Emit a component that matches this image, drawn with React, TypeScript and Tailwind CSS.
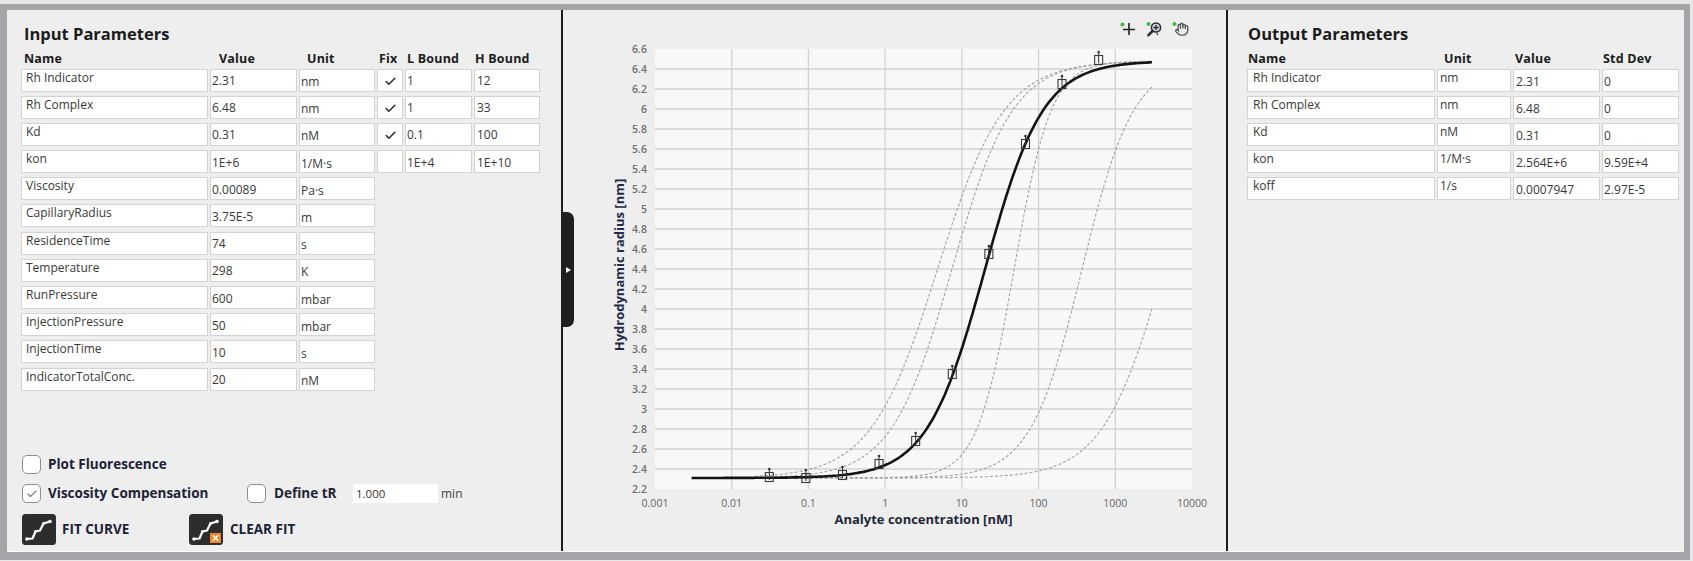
import { Check } from "lucide-react";
import clsx from "clsx";

type InputRow = {
  name: string;
  value: string;
  unit: string;
  fit?: { fix: boolean; lo: string; hi: string };
};

const inputRows: InputRow[] = [
  { name: "Rh Indicator", value: "2.31", unit: "nm", fit: { fix: true, lo: "1", hi: "12" } },
  { name: "Rh Complex", value: "6.48", unit: "nm", fit: { fix: true, lo: "1", hi: "33" } },
  { name: "Kd", value: "0.31", unit: "nM", fit: { fix: true, lo: "0.1", hi: "100" } },
  { name: "kon", value: "1E+6", unit: "1/M·s", fit: { fix: false, lo: "1E+4", hi: "1E+10" } },
  { name: "Viscosity", value: "0.00089", unit: "Pa·s" },
  { name: "CapillaryRadius", value: "3.75E-5", unit: "m" },
  { name: "ResidenceTime", value: "74", unit: "s" },
  { name: "Temperature", value: "298", unit: "K" },
  { name: "RunPressure", value: "600", unit: "mbar" },
  { name: "InjectionPressure", value: "50", unit: "mbar" },
  { name: "InjectionTime", value: "10", unit: "s" },
  { name: "IndicatorTotalConc.", value: "20", unit: "nM" },
];

const outputRows = [
  ["Rh Indicator", "nm", "2.31", "0"],
  ["Rh Complex", "nm", "6.48", "0"],
  ["Kd", "nM", "0.31", "0"],
  ["kon", "1/M·s", "2.564E+6", "9.59E+4"],
  ["koff", "1/s", "0.0007947", "2.97E-5"],
];

function Cell({ className, children }: { className: string; children?: React.ReactNode }) {
  return (
    <div
      className={clsx(
        "h-[23px] shrink-0 overflow-hidden whitespace-nowrap border border-[#d3d3d3] bg-white text-[12px] leading-[16px] text-[#383838]",
        className
      )}
    >
      {children}
    </div>
  );
}

function Box({ checked }: { checked?: boolean }) {
  return (
    <span className="flex h-[19px] w-[19px] shrink-0 items-center justify-center rounded-[5px] border-[1.5px] border-[#8e8e8e] bg-white">
      {checked && <Check size={12} strokeWidth={2.2} className="text-[#7c7c7c]" />}
    </span>
  );
}

function FitIcon({ clear }: { clear?: boolean }) {
  return (
    <svg width="34" height="31" viewBox="0 0 34 31" className="shrink-0">
      <rect x="0" y="0" width="34" height="31" rx="3.5" fill="#2d2d2d" />
      <path
        d="M5 25 L10.5 24.5 L13.5 17.5 L18 16.5 L21.5 9.5 L28 7.5"
        stroke="#fff"
        strokeWidth="2.2"
        fill="none"
        strokeLinecap="round"
        strokeLinejoin="round"
      />
      <circle cx="5" cy="25" r="1.8" fill="#fff" />
      <circle cx="13.5" cy="17.5" r="1.5" fill="#fff" />
      <circle cx="21.5" cy="9.5" r="1.5" fill="#fff" />
      <circle cx="28" cy="7.5" r="1.8" fill="#fff" />
      {clear && (
        <g>
          <rect x="21" y="19" width="11" height="10" fill="#f0862b" />
          <path d="M23.8 21.3 L29.2 26.7 M29.2 21.3 L23.8 26.7" stroke="#fff" strokeWidth="1.5" />
        </g>
      )}
    </svg>
  );
}

// ---- chart ----
const PX0 = 92;
const PX1 = 629;
const PY0 = 11;
const PY1 = 451;
const xOf = (c: number) => PX0 + ((Math.log10(c) + 3) * (PX1 - PX0)) / 7;
const yOf = (v: number) => PY1 - ((v - 2.2) / 4.4) * (PY1 - PY0);
const hill = (c: number, K: number, n: number) => {
  const r = Math.pow(c / K, n);
  return 2.31 + (4.17 * r) / (1 + r);
};

function curve(K: number, n: number, from: number, to: number) {
  const steps = 180;
  const a = Math.log10(from);
  const b = Math.log10(to);
  let d = "";
  for (let i = 0; i <= steps; i++) {
    const c = Math.pow(10, a + ((b - a) * i) / steps);
    d += `${i === 0 ? "M" : "L"}${xOf(c).toFixed(1)} ${yOf(hill(c, K, n)).toFixed(1)} `;
  }
  return d;
}

const dashed = [
  { K: 4.8, n: 1.0 },
  { K: 7.4, n: 1.1 },
  { K: 48, n: 1.8 },
  { K: 368, n: 1.29 },
  { K: 4280, n: 1.08 },
];

const points: [number, number][] = [
  [0.0309, 2.32],
  [0.0926, 2.31],
  [0.278, 2.34],
  [0.833, 2.45],
  [2.5, 2.68],
  [7.5, 3.35],
  [22.5, 4.55],
  [67.5, 5.65],
  [202, 6.25],
  [607, 6.49],
];

const yTicks = Array.from({ length: 23 }, (_, i) => 2.2 + i * 0.2);
const xTicks = ["0.001", "0.01", "0.1", "1", "10", "100", "1000", "10000"];

function Chart() {
  return (
    <svg width="663" height="513" viewBox="0 0 663 513" className="overflow-visible">
      <rect x={PX0} y={PY0} width={PX1 - PX0} height={PY1 - PY0} fill="#f8f8f8" />
      {yTicks.slice(1, -1).map((v) => (
        <line key={v} x1={PX0} x2={PX1} y1={yOf(v)} y2={yOf(v)} stroke="#d3d3d3" strokeWidth="1.3" />
      ))}
      {xTicks.slice(1, -1).map((_, i) => {
        const x = PX0 + ((i + 1) * (PX1 - PX0)) / 7;
        return <line key={i} x1={x} x2={x} y1={PY0} y2={PY1} stroke="#d3d3d3" strokeWidth="1.3" />;
      })}
      {yTicks.map((v) => (
        <text
          key={v}
          x={84}
          y={yOf(v)}
          textAnchor="end"
          dominantBaseline="central"
          fontSize="10.5"
          fontWeight="600"
          fill="#6e6e6e"
        >
          {Number(v.toFixed(1)).toString()}
        </text>
      ))}
      {xTicks.map((t, i) => (
        <text
          key={t}
          x={PX0 + (i * (PX1 - PX0)) / 7}
          y={465}
          textAnchor="middle"
          dominantBaseline="central"
          fontSize="10.5"
          fill="#666"
        >
          {t}
        </text>
      ))}
      <text x={(PX0 + PX1) / 2} y={481} textAnchor="middle" dominantBaseline="central" fontSize="13" fontWeight="700" fill="#23293a">
        Analyte concentration [nM]
      </text>
      <text
        transform={`translate(56 ${(PY0 + PY1) / 2 - 4}) rotate(-90)`}
        textAnchor="middle"
        dominantBaseline="central"
        fontSize="13"
        fontWeight="700"
        fill="#222c48"
      >
        Hydrodynamic radius [nm]
      </text>
      {dashed.map((c, i) => (
        <path key={i} d={curve(c.K, c.n, 0.02, 3000)} fill="none" stroke="#a0a0a0" strokeWidth="1.1" strokeDasharray="3 2" />
      ))}
      <path d={curve(20, 1.15, 0.003, 3000)} fill="none" stroke="#141414" strokeWidth="2.6" strokeLinejoin="round" />
      {points.map(([c, v]) => {
        const x = xOf(c);
        const y = yOf(v);
        return (
          <g key={c}>
            <line x1={x} x2={x} y1={y - 8} y2={y + 3} stroke="#333" strokeWidth="1" />
            <circle cx={x} cy={y - 8} r="1.3" fill="#333" />
            <rect x={x - 4} y={y - 4.5} width="8" height="9" fill="none" stroke="#3a3a3a" strokeWidth="1.1" />
          </g>
        );
      })}
    </svg>
  );
}

function CrossIcon() {
  return (
    <svg width="17" height="16" viewBox="0 0 17 16">
      <circle cx="2.5" cy="3.5" r="2" fill="#3dbb3d" />
      <path d="M9 2 V14 M3 8.5 H15" stroke="#222" strokeWidth="1.6" />
    </svg>
  );
}

function ZoomIcon() {
  return (
    <svg width="17" height="16" viewBox="0 0 17 16">
      <circle cx="2.5" cy="3" r="2" fill="#3dbb3d" />
      <circle cx="10" cy="6.5" r="4.6" fill="#c9d2e6" stroke="#2b2b2b" strokeWidth="1.5" />
      <path d="M10 4 V9 M7.5 6.5 H12.5" stroke="#2b2b2b" strokeWidth="1.3" />
      <path d="M6.6 10 L2.5 14.2" stroke="#2b2b2b" strokeWidth="2.6" strokeLinecap="round" />
      <path d="M10 12.5 L12.5 12.5 L11.25 14.5 Z" fill="#2b2b2b" />
    </svg>
  );
}

function HandIcon() {
  return (
    <svg width="17" height="16" viewBox="0 0 17 16">
      <circle cx="2.5" cy="3" r="2" fill="#3dbb3d" />
      <g transform="translate(2.5 1) scale(0.6)" fill="none" stroke="#555" strokeWidth="2.2" strokeLinecap="round" strokeLinejoin="round">
        <path d="M18 11V6a2 2 0 0 0-2-2a2 2 0 0 0-2 2" />
        <path d="M14 10V4a2 2 0 0 0-2-2a2 2 0 0 0-2 2v2" />
        <path d="M10 10.5V6a2 2 0 0 0-2-2a2 2 0 0 0-2 2v8" />
        <path d="M18 8a2 2 0 1 1 4 0v6a8 8 0 0 1-8 8h-2c-2.8 0-4.5-.86-5.990-2.34l-3.6-3.6a2 2 0 0 1 2.83-2.82L7 15" />
      </g>
    </svg>
  );
}

function InputPanel() {
  return (
    <div className="flex h-full w-[554px] shrink-0 flex-col pb-[6px] pl-[14px] pt-[12.5px]">
      <h2 className="pl-[3px] text-[16.5px] font-bold leading-[22px] text-[#1b1b1b]">Input Parameters</h2>
      <div className="mt-[7px] flex h-[14px] gap-[2px] text-[12.5px] font-bold leading-[14px] tracking-[0.2px] text-[#1c1c1c]">
        <div className="w-[187px] pl-[3px]">Name</div>
        <div className="w-[87px] pl-[9px]">Value</div>
        <div className="w-[76px] pl-[8px]">Unit</div>
        <div className="w-[26px] pl-[2px]">Fix</div>
        <div className="w-[67px] pl-[2px]">L Bound</div>
        <div className="w-[66px] pl-[1px]">H Bound</div>
      </div>
      <div className="mt-[3px] flex flex-col gap-[4.2px]">
        {inputRows.map((r) => (
          <div key={r.name} className="flex gap-[2px]">
            <Cell className="w-[187px] pl-[4px]">{r.name}</Cell>
            <Cell className="w-[87px] pl-[1px] pt-[3.5px]">{r.value}</Cell>
            <Cell className="w-[76px] pl-[1px] pt-[4.5px]">{r.unit}</Cell>
            {r.fit && (
              <>
                <Cell className="w-[26px] pl-[6px] pt-[5.5px]">
                  {r.fit.fix && <Check size={13} strokeWidth={3} className="text-[#2f2f2f]" />}
                </Cell>
                <Cell className="w-[67px] pl-[1px] pt-[3.5px]">{r.fit.lo}</Cell>
                <Cell className="w-[66px] pl-[2px] pt-[3.5px]">{r.fit.hi}</Cell>
              </>
            )}
          </div>
        ))}
      </div>
      <div className="mt-auto flex flex-col pl-[1px] text-[13.5px] font-bold leading-[19px] text-[#1d2236]">
        <label className="flex h-[19px] items-center gap-[7px]">
          <Box />
          <span>Plot Fluorescence</span>
        </label>
        <div className="mt-[10px] flex h-[19px] items-center">
          <label className="flex w-[225px] items-center gap-[7px]">
            <Box checked />
            <span>Viscosity Compensation</span>
          </label>
          <label className="flex items-center gap-[8px]">
            <Box />
            <span className="w-[79px]">Define tR</span>
          </label>
          <div className="h-[19px] w-[85px] bg-white pl-[3px] text-[11.5px] font-normal leading-[19px] text-[#333]">1.000</div>
          <span className="ml-[3px] text-[12px] font-normal text-[#444]">min</span>
        </div>
        <div className="mt-[11px] flex h-[31px] items-center">
          <div className="flex w-[167px] items-center gap-[6px]">
            <FitIcon />
            <span>FIT CURVE</span>
          </div>
          <div className="flex items-center gap-[7px]">
            <FitIcon clear />
            <span>CLEAR FIT</span>
          </div>
        </div>
      </div>
    </div>
  );
}

function ChartPanel() {
  return (
    <div className="relative flex h-full w-[663px] shrink-0 flex-col">
      <div className="flex h-[28px] justify-end gap-[9px] pr-[37px] pt-[11px]">
        <CrossIcon />
        <ZoomIcon />
        <HandIcon />
      </div>
      <Chart />
      <div className="absolute left-[-1px] top-[202px] flex h-[115px] w-[12px] items-center rounded-r-[7px] bg-[#1f1f1f] pl-[4px]">
        <span className="h-0 w-0 border-y-[3.5px] border-l-[5px] border-y-transparent border-l-white" />
      </div>
    </div>
  );
}

function OutputPanel() {
  return (
    <div className="flex h-full flex-1 flex-col pl-[19px] pt-[12.5px]">
      <h2 className="pl-[1px] text-[16.5px] font-bold leading-[22px] text-[#1b1b1b]">Output Parameters</h2>
      <div className="mt-[7px] flex h-[14px] gap-[2px] text-[12.5px] font-bold leading-[14px] tracking-[0.2px] text-[#1c1c1c]">
        <div className="w-[188px] pl-[1px]">Name</div>
        <div className="w-[74px] pl-[7px]">Unit</div>
        <div className="w-[87px] pl-[2px]">Value</div>
        <div className="w-[77px] pl-[1px]">Std Dev</div>
      </div>
      <div className="mt-[3px] flex flex-col gap-[4px]">
        {outputRows.map(([name, unit, value, sd]) => (
          <div key={name} className="flex gap-[2px]">
            <Cell className="w-[188px] pl-[5px]">{name}</Cell>
            <Cell className="w-[74px] pl-[2px] pt-[0.5px]">{unit}</Cell>
            <Cell className="w-[87px] pl-[2px] pt-[4px]">{value}</Cell>
            <Cell className="w-[77px] pl-[1px] pt-[4px]">{sd}</Cell>
          </div>
        ))}
      </div>
    </div>
  );
}

export default function App() {
  return (
    <div className="h-[561px] w-full bg-[#e7e7e7] pb-[1px] pr-[3px] pt-[4px] font-['Open_Sans',sans-serif]">
      <div className="h-full border-solid border-[#a4a4a9] border-b-[8px] border-l-[7px] border-r-[6px] border-t-[6px]">
        <div className="flex h-full border-b border-[#fafafa] bg-[#eeeeee]">
          <InputPanel />
          <div className="w-[2px] shrink-0 bg-[#1c1c1c]" />
          <ChartPanel />
          <div className="w-[2px] shrink-0 bg-[#1c1c1c]" />
          <OutputPanel />
        </div>
      </div>
    </div>
  );
}
